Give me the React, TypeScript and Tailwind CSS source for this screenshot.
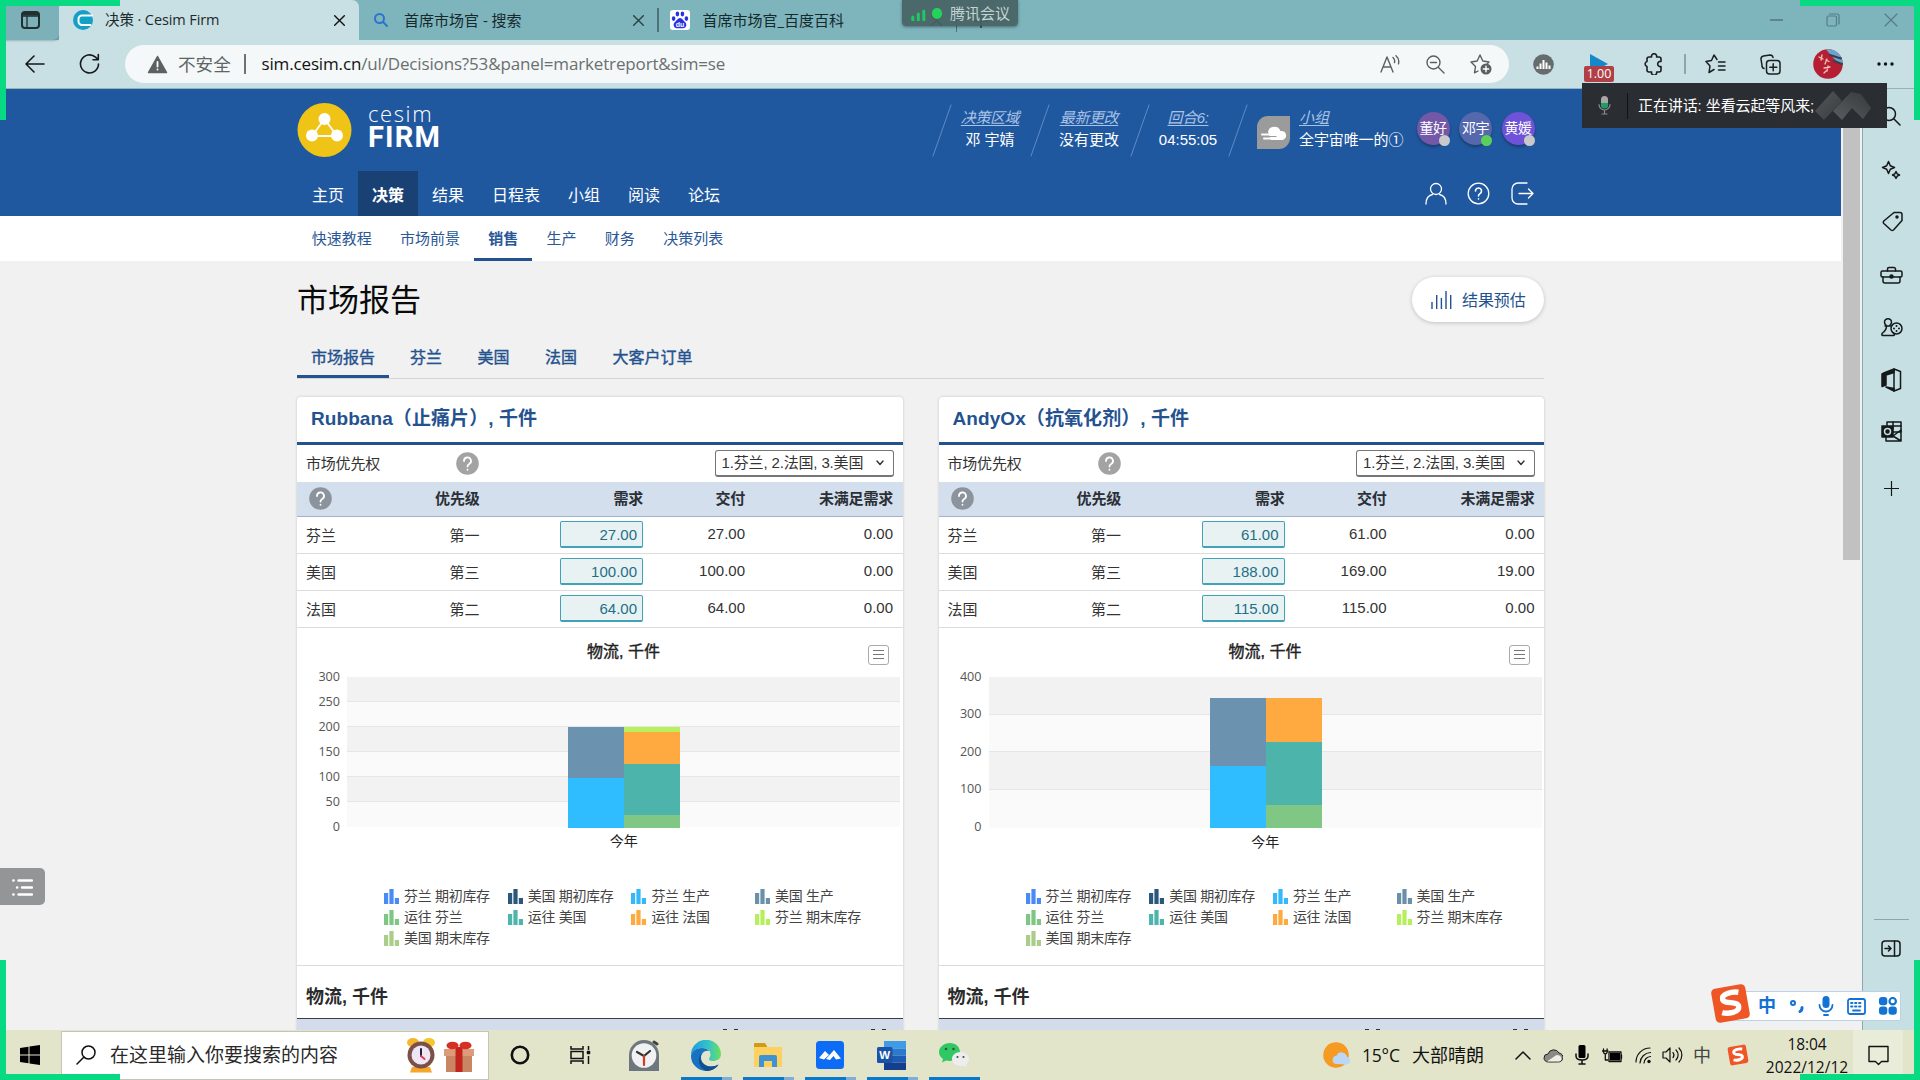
import React from "react";

const ui = "font-['Open_Sans','Noto_Sans_CJK_SC',sans-serif]";

type IconProps = { w: number; h: number; vb?: string; cls?: string; sw?: number; children: React.ReactNode };

function Ic({ w, h, vb, cls = "", sw = 1.5, children }: IconProps) {
  return (
    <svg
      width={w}
      height={h}
      viewBox={vb ?? `0 0 ${w} ${h}`}
      className={`shrink-0 block ${cls}`}
      fill="none"
      stroke="currentColor"
      strokeWidth={sw}
      strokeLinecap="round"
      strokeLinejoin="round"
    >
      {children}
    </svg>
  );
}

function CloseX({ s = 11, cls = "" }: { s?: number; cls?: string }) {
  return (
    <Ic w={s} h={s} vb="0 0 11 11" sw={1.4} cls={cls}>
      <path d="M0.7 0.7L10.3 10.3M10.3 0.7L0.7 10.3" />
    </Ic>
  );
}

function TabStrip() {
  return (
    <div className={`flex h-[40px] bg-[#7eb4bc] text-[14.5px] text-[#16292c] ${ui}`}>
      <div className="flex w-[59px] items-center rounded-br-[6px] bg-[#7cb1b9] pl-[21px] shadow-[1px_1px_2px_rgba(0,0,0,0.2)]">
        <Ic w={19} h={18} sw={2} cls="text-[#222f31]">
          <rect x="1" y="1" width="17" height="16" rx="3" />
          <path d="M1 5H18M6 5V17" strokeWidth="1.3" />
          <path d="M2 3H17" strokeWidth="3" />
        </Ic>
      </div>
      <div className="flex w-[300px] items-center rounded-t-[7px] bg-[#c8dfe3] pl-[14px]">
        <Ic w={20} h={20} sw={2}>
          <circle cx="10" cy="10" r="10" fill="#12a0c6" stroke="none" />
          <path d="M19 5.500H9a3.500 3.500 0 0 0-3.500 3.500v2.500A3.500 3.500 0 0 0 9 15H17.500" stroke="#fff" />
        </Ic>
        <span className="ml-[12px] w-[229px] whitespace-nowrap text-[14.5px] tracking-[-0.1px] text-[#1b2a2c]">决策 · Cesim Firm</span>
        <CloseX cls="text-[#111]" />
      </div>
      <div className="flex w-[298px] items-center pl-[15px]">
        <Ic w={14} h={14} sw={2} cls="text-[#2b74cf]">
          <circle cx="5.500" cy="5.500" r="4.500" />
          <path d="M9 9L13 13" />
        </Ic>
        <span className="ml-[16px] w-[229px] whitespace-nowrap text-[15px]">首席市场官 - 搜索</span>
        <CloseX cls="text-[#2a4245]" />
      </div>
      <div className="my-[8px] w-[1.5px] bg-[#4b7479]" />
      <div className="flex w-[297px] items-center pl-[11px]">
        <Ic w={20} h={20}>
          <rect width="20" height="20" rx="3" fill="#fff" stroke="none" />
          <g fill="#2932e1" stroke="none">
            <ellipse cx="7.4" cy="4" rx="1.8" ry="2.4" />
            <ellipse cx="12.4" cy="4" rx="1.8" ry="2.4" />
            <ellipse cx="3.6" cy="8.6" rx="1.8" ry="2.3" />
            <ellipse cx="16.4" cy="8.6" rx="1.8" ry="2.3" />
            <path d="M10 8c2.4 0 3 2.400 5.200 4.200 2.300 2 .8 6-2 6-1.600 0-4.800 0-6.400 0-2.800 0-4.300-4-2-6C7 10.400 7.600 8 10 8z" />
          </g>
          <text x="10" y="17" textAnchor="middle" fontSize="7" fontWeight="700" fill="#fff" stroke="none" fontFamily="Liberation Sans, sans-serif">du</text>
        </Ic>
        <span className="ml-[13px] w-[228px] whitespace-nowrap text-[15px]">首席市场官_百度百科</span>
        <CloseX cls="text-[#2a4245]" />
      </div>
      <div className="my-[8px] w-[1.5px] bg-[#4b7479]" />
      <Ic w={14} h={14} cls="ml-[17px] mt-[14px] text-[#2a4245]">
        <path d="M7 0V14M0 7H14" />
      </Ic>
      <div className="ml-auto flex w-[150px] items-center text-[#537e84]">
        <div className="h-[1.500px] w-[13px] bg-[#5d858a]" />
        <Ic w={14} h={14} sw={1.2} cls="ml-[43px]">
          <rect x="1" y="3" width="9.500" height="10" rx="1.500" />
          <path d="M3.500 1H11a2 2 0 0 1 2 2V11" />
        </Ic>
        <Ic w={14} h={14} sw={1.2} cls="ml-[44px]">
          <path d="M1 1L13 13M13 1L1 13" />
        </Ic>
      </div>
    </div>
  );
}

function Toolbar() {
  return (
    <div className={`flex h-[49px] items-center border-b-[1.500px] border-[#8fb5ba] bg-[#c8dfe3] ${ui}`}>
      <Ic w={20} h={18} sw={1.6} cls="ml-[25px] text-[#15191a]">
        <path d="M19 9H1M9 1L1 9L9 17" />
      </Ic>
      <Ic w={21} h={22} sw={1.6} cls="ml-[34px] text-[#15191a]">
        <path d="M19.500 11a9 9 0 1 1-3-6.800L19 6.500M19.300 1.500V6.800H14" />
      </Ic>
      <div className="ml-[25px] flex h-[38px] w-[1384px] items-center rounded-full bg-[#f4f8f8] pl-[22px]">
        <Ic w={21} h={19}>
          <path d="M10.500 1.500L19.500 17.500H1.500Z" fill="#5c6162" stroke="#5c6162" />
          <path d="M10.500 7V11.500M10.500 14.500V14.600" stroke="#fff" strokeWidth="1.800" />
        </Ic>
        <span className="ml-[10px] w-[66px] whitespace-nowrap text-[17.600px] text-[#5f6566]">不安全</span>
        <div className="h-[20px] w-[1.500px] bg-[#6d7374]" />
        <span className="ml-[16px] flex-1 whitespace-nowrap text-[17px] tracking-[-0.150px] text-[#6a6f70]">
          <span className="text-[#101213]">sim.cesim.cn</span>/ul/Decisions?53&amp;panel=marketreport&amp;sim=se
        </span>
        <Ic w={20} h={18} sw={1.400} cls="text-[#5b5f60]">
          <path d="M1 17L7 2L13 17M3.200 12H10.800M13 2.500a5 5 0 0 1 1.500 5M16 .8a8 8 0 0 1 2.500 8" />
        </Ic>
        <Ic w={19} h={19} sw={1.400} cls="ml-[26px] text-[#5b5f60]">
          <circle cx="7.500" cy="7.500" r="6.500" />
          <path d="M12.500 12.500L18 18M4.500 7.500H10.500" />
        </Ic>
        <Ic w={22} h={22} sw={1.400} cls="ml-[25px] mr-[17px] text-[#5b5f60]">
          <path d="M8 18L4.500 19.800L5.500 13.500L1 9L7.200 8L10 2L12.800 8L19 9L17.500 10.500" />
          <circle cx="16" cy="16" r="5.500" fill="#5b5f60" stroke="none" />
          <path d="M16 13.300V18.700M13.300 16H18.700" stroke="#fff" />
        </Ic>
      </div>
      <Ic w={21} h={21} cls="ml-[24px]" sw={2}>
        <circle cx="10.500" cy="10.500" r="10.300" fill="#666c6d" stroke="none" />
        <path d="M4.500 15V12.500M7.500 15V9.500M10.500 15V6M13.500 15V8.500M16.500 15V11.500" stroke="#fff" strokeLinecap="butt" />
      </Ic>
      <div className="ml-[30px] flex w-[30px] flex-col pt-[7px]">
        <Ic w={18} h={13} cls="ml-[6px]">
          <path d="M0 0L18 10L12 13H0Z" fill="#1488c8" stroke="none" />
        </Ic>
        <div className="-mt-[1px] h-[16px] rounded-[2px] bg-[#b04045] text-center text-[12.500px] leading-[16px] text-white">1.00</div>
      </div>
      <Ic w={20} h={22} sw={1.600} cls="ml-[30px] text-[#1a1f20]">
        <path d="M5 4H7.600a2.600 2.600 0 1 1 5 0H15a2 2 0 0 1 2 2V8.500a2.600 2.600 0 1 0 0 5V17a2 2 0 0 1-2 2H12.600a2.600 2.600 0 1 1-5 0H5a2 2 0 0 1-2-2V13.500a2.600 2.600 0 0 1 0-5V6a2 2 0 0 1 2-2Z" />
      </Ic>
      <div className="ml-[20px] h-[20px] w-[1.500px] bg-[#8fa4a7]" />
      <Ic w={21} h={20} sw={1.500} cls="ml-[19px] text-[#1a1f20]">
        <path d="M12 5.500L9 1L6.500 6.500L1 7.500L5 12L4 18.500L9 15.500M13.500 8H20M13.500 12H20M13.500 16H20" />
      </Ic>
      <Ic w={21} h={21} sw={1.500} cls="ml-[34px] text-[#1a1f20]">
        <path d="M4 14.500a3 3 0 0 1-2-3L1 5a3 3 0 0 1 2.500-3L10 1a3 3 0 0 1 3 2.500" />
        <rect x="6.500" y="6.500" width="13.500" height="13.500" rx="3" />
        <path d="M13.200 9.800V16.800M9.800 13.300H16.800" />
      </Ic>
      <Ic w={30} h={30} cls="ml-[32px]">
        <circle cx="15" cy="15" r="14.800" fill="#b61f33" stroke="none" />
        <path d="M13 .4A14.800 14.800 0 0 1 29.700 14C24 15 20 8 13 .4Z" fill="#6ba3d0" stroke="none" />
        <path d="M17 6L28 9.500M21 12L29 15" stroke="#37424d" strokeWidth="2" />
        <path d="M6 8L10 10M9 6L8 11M13 11L16 12.500M14 10L12 15M11 19L17 18M15 17L14 22M11 24L13 22" stroke="#f0c3b5" strokeWidth="1.300" />
      </Ic>
      <Ic w={17} h={4} cls="ml-[34px] text-[#111]">
        <g fill="currentColor" stroke="none">
          <circle cx="2" cy="2" r="1.700" />
          <circle cx="8.500" cy="2" r="1.700" />
          <circle cx="15" cy="2" r="1.700" />
        </g>
      </Ic>
    </div>
  );
}

function HeadInfo({ label, value, cls }: { label: string; value: string; cls: string }) {
  return (
    <div className={`flex flex-col items-center whitespace-nowrap pr-[2px] pt-[3px] text-[15px] leading-[22px] ${cls}`}>
      <span className="italic text-[#a9c3e6] underline underline-offset-2 tracking-[-0.4px]">{label}</span>
      <span className="text-white">{value}</span>
    </div>
  );
}

function Slash() {
  return (
    <Ic w={20} h={53} sw={1} cls="text-[#5f8bc8]">
      <path d="M19 1L1 52" />
    </Ic>
  );
}

function Avatar({ name, bg, dot }: { name: string; bg: string; dot: string }) {
  return (
    <div className={`relative flex h-[33px] w-[33px] items-center justify-center rounded-full shadow-[0_2px_3px_rgba(0,0,0,0.3)] ${bg}`}>
      <span className="whitespace-nowrap text-[14px] tracking-[-0.5px] text-white">{name}</span>
      <span className={`absolute -bottom-[1px] right-0 h-[11px] w-[11px] rounded-full ${dot}`} />
    </div>
  );
}

function SiteHeader() {
  const nav = ["主页", "决策", "结果", "日程表", "小组", "阅读", "论坛"];
  return (
    <header className="h-[127px] bg-[#20589f] pl-[297px]">
      <div className="flex h-[82px]">
        <Ic w={55} h={55} cls="mt-[14px]">
          <circle cx="27.500" cy="27" r="27" fill="#efc417" stroke="none" />
          <path d="M27.500 16L15 33H40Z" stroke="#fff" strokeWidth="1.800" />
          <g fill="#fff" stroke="none">
            <circle cx="27.500" cy="16" r="6" />
            <circle cx="15" cy="32.500" r="6" />
            <circle cx="40" cy="32.500" r="6" />
          </g>
        </Ic>
        <div className="ml-[16px] mt-[11px] w-[564px] text-white">
          <div className="pt-px font-['Open_Sans',sans-serif] text-[22px] font-light leading-[24px] tracking-[1.6px]">cesim</div>
          <div className="font-['Roboto',sans-serif] text-[29px] font-bold leading-[24px] tracking-[1.2px]">FIRM</div>
        </div>
        <div className="mt-[15px] flex h-[53px]">
          <Slash />
          <HeadInfo label="决策区域" value="邓 宇婧" cls="w-[78px]" />
          <Slash />
          <HeadInfo label="最新更改" value="没有更改" cls="w-[80px]" />
          <Slash />
          <HeadInfo label="回合6:" value="04:55:05" cls="w-[78px]" />
          <Slash />
          <Ic w={33} h={34} cls="ml-[9px] mt-[12px]">
            <path d="M11 0H33V22a11 11 0 0 1-11 11H0V11a11 11 0 0 1 11-11Z" fill="#9b9b9b" stroke="none" />
            <path d="M11 16a6.500 6.500 0 0 1 12.500-1a4.500 4.500 0 0 1 2 9H14Z" fill="#fff" stroke="none" />
            <path d="M5 18.500H19M7 22.500H22" stroke="#fff" strokeWidth="2" />
            <path d="M4 20.500H19" stroke="#9b9b9b" strokeWidth="1.200" />
          </Ic>
          <div className="ml-[9px] flex w-[117.500px] flex-col whitespace-nowrap pt-[3px] text-[15px] leading-[22px]">
            <span className="italic text-[#a9c3e6] underline underline-offset-2">小组</span>
            <span className="tracking-[-0.1px] text-white">全宇宙唯一的①</span>
          </div>
          <div className="flex gap-[9.500px] pt-[8px]">
            <Avatar name="董好" bg="bg-[#7258a6]" dot="bg-[#c9c9cb]" />
            <Avatar name="邓宇" bg="bg-[#5567ad]" dot="bg-[#5ad05a]" />
            <Avatar name="黄媛" bg="bg-[#6e52d8]" dot="bg-[#c9c9cb]" />
          </div>
        </div>
      </div>
      <div className="flex h-[45px] items-center">
        <nav className="flex h-full w-[1128px] pl-px">
          {nav.map((n) => (
            <span
              key={n}
              className={`flex h-full items-center px-[14px] pt-[5px] text-[16px] text-white ${n === "决策" ? "bg-[#1a4173] font-bold" : "font-normal"}`}
            >
              {n}
            </span>
          ))}
        </nav>
        <Ic w={22} h={23} sw={1.300} cls="text-white">
          <circle cx="11" cy="7" r="5.500" />
          <path d="M1 22C1 15 5 13 7.500 12.500M21 22C21 15 17 13 14.500 12.500" />
        </Ic>
        <Ic w={23} h={23} sw={1.300} cls="ml-[20px] text-white">
          <circle cx="11.500" cy="11.500" r="10.300" />
          <path d="M8.500 9a3 3 0 1 1 4.500 2.600c-1.200.7-1.500 1.200-1.500 2.400M11.500 16.800V17" strokeWidth="1.600" />
        </Ic>
        <Ic w={23} h={23} sw={1.300} cls="ml-[21px] text-white">
          <path d="M16 1H7a6 6 0 0 0-6 6v9a6 6 0 0 0 6 6h9M8 11.500H22M17.500 7L22 11.500L17.500 16" />
        </Ic>
      </div>
    </header>
  );
}

function SubNav() {
  const items = ["快速教程", "市场前景", "销售", "生产", "财务", "决策列表"];
  return (
    <div className="flex h-[45px] bg-white pl-[297.500px] text-[15px] text-[#2a5796]">
      {items.map((t) => (
        <span
          key={t}
          className={`flex items-center border-b-[3px] px-[14.150px] pt-[4px] ${t === "销售" ? "border-[#24528f] font-bold" : "border-transparent"}`}
        >
          {t}
        </span>
      ))}
    </div>
  );
}

function Help({ dark }: { dark?: boolean }) {
  return (
    <Ic w={23} h={23} sw={1.800}>
      <circle cx="11.500" cy="11.500" r="11.300" fill={dark ? "#8b939c" : "#a3a3a3"} stroke="none" />
      <path d="M8 9a3.500 3.500 0 1 1 5.200 3c-1.300.8-1.700 1.200-1.700 2.500M11.500 17.700V17.800" stroke="#fff" />
    </Ic>
  );
}

const cols = "grid grid-cols-[100px_82.500px_163.500px_102px_1fr] items-center pr-[9.500px] text-right";

type Seg = { c: string; h: number };
type CardData = {
  title: string;
  rows: string[][];
  ticks: number[];
  left: Seg[];
  right: Seg[];
};

const legend = [
  ["芬兰 期初库存", "#4a8af4"],
  ["美国 期初库存", "#2a577c"],
  ["芬兰 生产", "#35b8fa"],
  ["美国 生产", "#6b90aa"],
  ["运往 芬兰", "#7fc583"],
  ["运往 美国", "#4db5ab"],
  ["运往 法国", "#ffaa3f"],
  ["芬兰 期末库存", "#b5f05c"],
  ["美国 期末库存", "#abcd8a"],
];

function Stack({ segs }: { segs: Seg[] }) {
  return (
    <div className="flex w-[56.200px] flex-col">
      {segs.map((s) => (
        <div key={s.c} style={{ height: s.h, background: s.c }} />
      ))}
    </div>
  );
}

function Chart({ d }: { d: CardData }) {
  const step = 150.5 / (d.ticks.length - 1);
  return (
    <div className="h-[338px] border-b border-[#dcdcdc]">
      <div className="flex h-[49.500px] items-start justify-between pl-[290px] pr-[14px]">
        <span className="mt-[12px] whitespace-nowrap text-[16px] leading-[24px] text-[#222] [-webkit-text-stroke:0.4px]">物流, 千件</span>
        <div className="mt-[17px] flex h-[20px] w-[21px] flex-col items-center justify-center gap-[3px] rounded-[3px] border border-[#aaa] bg-white">
          <div className="h-px w-[11px] bg-[#777]" />
          <div className="h-px w-[11px] bg-[#777]" />
          <div className="h-px w-[11px] bg-[#777]" />
        </div>
      </div>
      <div className="flex">
        <div className={`flex w-[50px] flex-col pr-[7px] text-right text-[12.600px] text-[#555] ${ui}`}>
          {d.ticks.map((t) => (
            <div key={t} className="flex items-center justify-end" style={{ height: step, marginTop: t === d.ticks[0] ? -step / 2 : 0 }}>
              {t}
            </div>
          ))}
        </div>
        <div className="relative h-[150.500px] w-[553px]">
          {d.ticks.slice(1).map((t, i) => (
            <div
              key={t}
              className={`border-b ${i === d.ticks.length - 2 ? "border-transparent" : "border-[#e6e6e6]"} ${i % 2 ? "bg-[#fafafa]" : "bg-[#f2f2f2]"}`}
              style={{ height: step }}
            />
          ))}
          <div className="absolute bottom-0 left-[221px] flex items-end">
            <Stack segs={d.left} />
            <Stack segs={d.right} />
          </div>
        </div>
      </div>
      <div className="pl-[48px] text-center text-[14px] leading-[28px] text-[#222]" style={{ marginTop: -step / 2 }}>
        今年
      </div>
      <div className="mt-[29px] grid grid-cols-[repeat(4,123.700px)] pl-[87px]">
        {legend.map(([t, c]) => (
          <div key={t} className="flex h-[21.200px] items-center whitespace-nowrap text-[14px] tracking-[-0.300px] text-[#444]">
            <svg width="16" height="15" className="mr-[4px] mt-[3px]" fill={c}>
              <rect x="0" y="4" width="4.200" height="11" />
              <rect x="5.400" y="0" width="4.200" height="15" />
              <rect x="10.800" y="9" width="4.200" height="6" />
            </svg>
            <span className="pt-[2px]">{t}</span>
          </div>
        ))}
      </div>
    </div>
  );
}

function Card({ d }: { d: CardData }) {
  return (
    <section className="h-[640px] w-[605.500px] rounded-t-[4px] bg-white shadow-[0_0_3px_rgba(0,0,0,0.18)]">
      <h2 className="flex h-[48.500px] items-center whitespace-pre border-b-[3px] border-[#24528f] pl-[14px] text-[19px] font-bold tracking-[0.08px] text-[#24528f]">{d.title}</h2>
      <div className="flex h-[36.500px] items-center pl-[9px] pr-[9px] text-[15px] text-[#333]">
        <span className="w-[150px] pt-px tracking-[-0.2px]">市场优先权</span>
        <Help />
        <div className="ml-auto flex h-[27px] w-[179px] items-center whitespace-nowrap rounded-[3px] border border-b-2 border-[#767676] pl-[6px] pt-px text-[15px] tracking-[-0.150px]">
          1.芬兰, 2.法国, 3.美国
          <Ic w={8} h={6} cls="ml-auto mr-[9px]" sw={1.400}>
            <path d="M1 1L4 4.500L7 1" />
          </Ic>
        </div>
      </div>
      <div className={`${cols} h-[35px] border-b border-[#a3b2c8] bg-[#d3dfed] text-[15px] font-bold tracking-[-0.2px] text-[#2b2f36]`}>
        <span className="pl-[12px]">
          <Help dark />
        </span>
        <span className="pt-[2px]">优先级</span>
        <span className="pt-[2px]">需求</span>
        <span className="pt-[2px]">交付</span>
        <span className="pt-[2px]">未满足需求</span>
      </div>
      {d.rows.map((r) => (
        <div key={r[0]} className={`${cols} h-[37px] border-b border-[#dcdcdc] text-[15px] text-[#333]`}>
          <span className="pl-[9px] pt-[3px] text-left">{r[0]}</span>
          <span className="pt-[3px]">{r[1]}</span>
          <span className="ml-auto flex h-[27px] w-[83px] items-center justify-end rounded-[2px] border border-b-2 border-[#3fa3b5] bg-[#e8f2f3] pr-[5px] pt-[2px] text-[#1f6f86]">{r[2]}</span>
          <span>{r[3]}</span>
          <span>{r[4]}</span>
        </div>
      ))}
      <Chart d={d} />
      <h3 className="flex h-[53px] items-center border-b-[1.500px] border-[#3a3f46] pl-[9px] pt-[11px] text-[18px] font-bold text-[#2b2b2b]">物流, 千件</h3>
      <div className="flex h-[11px] items-end bg-[#d3dcea] pl-[426px]">
        <div className="mr-[7px] h-px w-[4px] bg-[#333]" />
        <div className="h-px w-[4px] bg-[#333]" />
        <div className="ml-[133px] mr-[7px] h-px w-[4px] bg-[#333]" />
        <div className="h-px w-[4px] bg-[#333]" />
      </div>
    </section>
  );
}

const cardA: CardData = {
  title: "Rubbana（止痛片）, 千件",
  rows: [
    ["芬兰", "第一", "27.00", "27.00", "0.00"],
    ["美国", "第三", "100.00", "100.00", "0.00"],
    ["法国", "第二", "64.00", "64.00", "0.00"],
  ],
  ticks: [300, 250, 200, 150, 100, 50, 0],
  left: [
    { c: "#6b92ae", h: 50.5 },
    { c: "#2fbdff", h: 50 },
  ],
  right: [
    { c: "#b8f15c", h: 4.5 },
    { c: "#ffaa40", h: 32.5 },
    { c: "#4cb4aa", h: 50.5 },
    { c: "#80c684", h: 13 },
  ],
};

const cardB: CardData = {
  title: "AndyOx（抗氧化剂）, 千件",
  rows: [
    ["芬兰", "第一", "61.00", "61.00", "0.00"],
    ["美国", "第三", "188.00", "169.00", "19.00"],
    ["法国", "第二", "115.00", "115.00", "0.00"],
  ],
  ticks: [400, 300, 200, 100, 0],
  left: [
    { c: "#6b92ae", h: 67.5 },
    { c: "#2fbdff", h: 62 },
  ],
  right: [
    { c: "#ffaa40", h: 43.5 },
    { c: "#4cb4aa", h: 63 },
    { c: "#80c684", h: 23 },
  ],
};

function Content() {
  return (
    <main className="h-[769px] overflow-hidden bg-[#f1f1f1] pl-[297px]">
      <div className="flex h-[77px] w-[1247px] items-center justify-between">
        <h1 className="pt-[3px] text-[31px] text-[#0a0a0a]">市场报告</h1>
        <div className="flex h-[45px] w-[132px] items-center rounded-full bg-white pl-[19px] text-[#24528f] shadow-[0_1px_4px_rgba(0,0,0,0.2)]">
          <Ic w={21} h={20} sw={1.400}>
            <path d="M1 12V19M5.700 5V19M10.400 8V19M15 1V19M19.700 5V19" strokeLinecap="butt" />
          </Ic>
          <span className="ml-[10px] pt-[2px] text-[16px] tracking-[-0.1px]">结果预估</span>
        </div>
      </div>
      <div className="flex h-[41px] w-[1247px] gap-[6.500px] border-b border-[#d5d5d5] text-[16px] text-[#24528f] [-webkit-text-stroke:0.4px]">
        <span className="flex items-center border-b-[3px] border-[#24528f] px-[14px] pt-[2px]">市场报告</span>
        {["芬兰", "美国", "法国", "大客户订单"].map((t) => (
          <span key={t} className="flex items-center border-b-[3px] border-transparent px-[14.500px] pt-[2px]">{t}</span>
        ))}
      </div>
      <div className="mt-[17.500px] flex gap-[36px]">
        <Card d={cardA} />
        <Card d={cardB} />
      </div>
    </main>
  );
}

function Sidebar() {
  return (
    <aside className="flex w-[58px] flex-col items-center border-l border-[#93a5a8] bg-[#c6dfe2] pr-[1px] text-[#15191a]">
      <Ic w={20} h={20} cls="mt-[17px]">
        <circle cx="8" cy="8" r="6.500" />
        <path d="M13 13L19 19" />
      </Ic>
      <Ic w={20} h={20} cls="mt-[33px]">
        <path d="M7.500 2.500L9.300 6.800L13.500 8.500L9.300 10.200L7.500 14.500L5.700 10.200L1.500 8.500L5.700 6.800ZM15 12.500L16.200 14.800L18.500 16L16.200 17.200L15 19.500L13.800 17.200L11.500 16L13.800 14.800Z" />
      </Ic>
      <Ic w={21} h={21} cls="ml-[2px] mt-[32px]">
        <path d="M12 1.500H18a2 2 0 0 1 2 2V9.500L11.500 19a2 2 0 0 1-2.500 0L1.800 12.500a2 2 0 0 1 0-2.500Z" />
        <circle cx="15" cy="6" r="1" fill="currentColor" />
      </Ic>
      <Ic w={23} h={18} cls="mt-[34px]">
        <rect x="1" y="5" width="21" height="6" rx="1.500" />
        <path d="M3 11V15a2 2 0 0 0 2 2H18a2 2 0 0 0 2-2V11M7.500 5V3a1.500 1.500 0 0 1 1.500-1.500H14A1.500 1.500 0 0 1 15.500 3V5" />
        <circle cx="11.500" cy="10.500" r="1.500" fill="currentColor" />
      </Ic>
      <Ic w={23} h={20} cls="mt-[33px]">
        <path d="M6 8a3.500 3.500 0 1 1 4 0M5 9H10.500M6.500 9c0 4-1.500 5-4 7-1 1-1 2.500.5 2.500H13.500c1.500 0 1-1.500 0-2.500" />
        <circle cx="16.500" cy="11.500" r="5.500" />
        <g fill="currentColor" stroke="none">
          <circle cx="16.500" cy="9" r="1" />
          <circle cx="16.500" cy="14" r="1" />
          <circle cx="14" cy="11.500" r="1" />
          <circle cx="19" cy="11.500" r="1" />
        </g>
      </Ic>
      <Ic w={21} h={24} cls="mt-[31px]">
        <path d="M13 1L19.500 3.500V20.500L13 23V1Z" />
        <path d="M13 1L4 4.500L1 6V18.500L5 17V7L13 4.500ZM5 19L13 20.500V23Z" fill="currentColor" />
      </Ic>
      <Ic w={21} h={21} cls="mt-[29px]">
        <rect x="6" y="1" width="14" height="10" />
        <path d="M12 1V8M12 5H20M5 13V20H20V9L12 15L20 20" />
        <rect x="1" y="5" width="11" height="11" fill="currentColor" />
        <circle cx="6.500" cy="10.500" r="3" stroke="#c6dfe2" />
      </Ic>
      <Ic w={15} h={15} cls="mt-[39px]" sw={1.200}>
        <path d="M7.500 0V15M0 7.500H15" />
      </Ic>
      <div className="mt-[423px] h-px w-[35px] bg-[#8ea6a9]" />
      <Ic w={20} h={17} cls="mt-[20px]">
        <rect x="1" y="1" width="18" height="15" rx="3" />
        <path d="M13.500 1V16M4 8.500H10M7.500 6L10 8.500L7.500 11" />
      </Ic>
    </aside>
  );
}

function Sogou({ s }: { s: number }) {
  return (
    <Ic w={s} h={s} vb="0 0 38 38">
      <g transform="rotate(-10 19 19)">
        <rect x="3" y="3" width="32" height="32" rx="4" fill="#ee5626" stroke="none" />
        <path d="M28 10C22 8 12 9 12.500 14C13 19 26 17.500 26 23C26 28.500 15 28.500 10 26" stroke="#fff" strokeWidth="5" strokeLinecap="butt" />
      </g>
    </Ic>
  );
}

function Running({ children, two = true }: { children: React.ReactNode; two?: boolean }) {
  return (
    <div className="mr-[11px] flex h-[50px] w-[51px] flex-col items-center justify-between">
      <div className="flex h-[47px] items-center pt-[3px] pr-px">{children}</div>
      <div className="flex h-[3px] w-full">
        <div className="flex-1 bg-[#0e78c8]" />
        {two && <div className="w-[10px] bg-[#7faedb]" />}
      </div>
    </div>
  );
}

function Taskbar() {
  return (
    <div className={`flex h-[50px] items-center bg-[#e3e5cb] text-[#111] ${ui}`}>
      <Ic w={20} h={20} cls="ml-[20px]">
        <g fill="#000" stroke="none">
          <path d="M0 3L8.500 1.700V9.500H0ZM9.500 1.500L20 0V9.500H9.500ZM0 10.500H8.500V18.300L0 17ZM9.500 10.500H20V20L9.500 18.500Z" />
        </g>
      </Ic>
      <div className="ml-[20.500px] flex h-[49px] w-[428.500px] items-center border border-[#c3c5b8] bg-white pl-[14px]">
        <Ic w={20} h={20} sw={1.500}>
          <circle cx="12.500" cy="7.500" r="6.500" />
          <path d="M8 12L1 19" />
        </Ic>
        <span className="ml-[14.500px] w-[295.500px] whitespace-nowrap text-[19px] text-[#2a2a2a]">在这里输入你要搜索的内容</span>
        <Ic w={30} h={36}>
          <ellipse cx="7" cy="5.500" rx="6" ry="4.500" fill="#f7b52c" stroke="none" />
          <ellipse cx="23" cy="5.500" rx="6" ry="4.500" fill="#f7c52c" stroke="none" />
          <path d="M6 30H24L26 35.500H4Z" fill="#f7a62c" stroke="none" />
          <circle cx="15" cy="18" r="13.500" fill="#7b5048" stroke="none" />
          <circle cx="15" cy="18" r="9.500" fill="#eee6f4" stroke="none" />
          <path d="M15 12V19" stroke="#26203a" strokeWidth="2" />
          <path d="M15 19L18.500 22" stroke="#e8395c" strokeWidth="2" />
        </Ic>
        <Ic w={30} h={32} cls="ml-[8px] mt-[3px]">
          <path d="M2 14H28V31H2Z" fill="#c98664" stroke="none" />
          <path d="M0 8H30V15H0Z" fill="#dd9c79" stroke="none" />
          <path d="M11.500 6H18.500V31H11.500Z" fill="#c3241d" stroke="none" />
          <ellipse cx="8.500" cy="4.500" rx="6" ry="3.800" fill="#d52f26" stroke="none" />
          <ellipse cx="21.500" cy="4.500" rx="6" ry="3.800" fill="#d52f26" stroke="none" />
        </Ic>
      </div>
      <Ic w={20} h={20} sw={2.600} cls="ml-[21px]">
        <circle cx="10" cy="10" r="8.200" />
      </Ic>
      <Ic w={21} h={20} sw={1.500} cls="ml-[40px]">
        <path d="M1 1V4H13V1M1 19V16H13V19M1 6.500H13V13.500H1ZM18.500 1V5M18.500 11V19" strokeLinecap="butt" strokeLinejoin="miter" />
        <rect x="17.500" y="6.500" width="2" height="2" fill="#111" />
      </Ic>
      <Ic w={30} h={31} cls="ml-[38px] mr-[22px]">
        <path d="M0 15a15 15 0 0 1 30 0V31H0Z" fill="#6e7780" stroke="none" />
        <circle cx="15" cy="15.500" r="12.300" fill="#f0f1f2" stroke="none" />
        <path d="M25 2L28 4" stroke="#444" strokeWidth="3" />
        <path d="M8 12L15 16L21 11" stroke="#333" strokeWidth="2.200" />
        <path d="M15 16V25" stroke="#d43b24" strokeWidth="2.200" />
      </Ic>
      <Running>
        <Ic w={30} h={31}>
          <defs>
            <linearGradient id="edgeTop" x1="0" y1="0.500" x2="1" y2="0.500">
              <stop offset="0" stopColor="#1d9be0" />
              <stop offset="0.600" stopColor="#36c6c4" />
              <stop offset="1" stopColor="#6be05a" />
            </linearGradient>
          </defs>
          <path d="M0 15.500A15 15 0 0 1 30 14c0 5-4 7-8 7-3 0-4-1-4-2s1.500-2 1.500-4.500C19.500 10 16 8 11 8 5 8 1 11 0 15.500Z" fill="url(#edgeTop)" stroke="none" />
          <path d="M0 15.500C1 11 5 8 11 8c3 0 6 1 7.500 3C14 9.500 10 13 10 18c0 5 5 8.500 10 8.500 4 0 6.500-1.500 7.500-2-2.500 4-7 6.500-12.500 6.500A15.200 15.200 0 0 1 0 15.500Z" fill="#1673c4" stroke="none" />
          <path d="M11 13C9.500 15 9 17 10 20c1.500 4 5.500 6.500 10 6.500 4 0 6.500-1.500 7.500-2-2.500 4-7 6.500-12.500 6.500C8 28 5 18 11 13Z" fill="#124f8f" stroke="none" />
        </Ic>
      </Running>
      <Running>
        <Ic w={28} h={25}>
          <path d="M0 1a1 1 0 0 1 1-1H11L13 3V6H0Z" fill="#d39a17" stroke="none" />
          <path d="M0 4H27a1 1 0 0 1 1 1V23a1 1 0 0 1-1 1H1a1 1 0 0 1-1-1Z" fill="#fdd15f" stroke="none" />
          <path d="M5 24V14a2 2 0 0 1 2-2H21a2 2 0 0 1 2 2V24H18V18H10V24Z" fill="#3f93d2" stroke="none" />
        </Ic>
      </Running>
      <Running>
        <Ic w={28} h={28}>
          <rect width="28" height="28" rx="3.500" fill="#0d6cf5" stroke="none" />
          <path d="M3 17L9 10L13 14L8 18.500ZM10 18L18 9L25 17.500L20 18.500L17.500 15L14 19Z" fill="#fff" stroke="none" />
        </Ic>
      </Running>
      <Running>
        <Ic w={30} h={29}>
          <path d="M7 0H29V7.500H7Z" fill="#3f9be6" stroke="none" />
          <path d="M7 7.500H29V14.500H7Z" fill="#2a7bd0" stroke="none" />
          <path d="M7 14.500H29V21.500H7Z" fill="#1c5cb4" stroke="none" />
          <path d="M7 21.500H29V29H7Z" fill="#133f8c" stroke="none" />
          <rect x="0" y="6" width="15.500" height="16" rx="1.500" fill="#1a53a8" stroke="none" />
          <text x="7.700" y="18.300" textAnchor="middle" fontSize="11.500" fontWeight="700" fill="#fff" stroke="none" fontFamily="Liberation Sans, sans-serif">W</text>
        </Ic>
      </Running>
      <Running two={false}>
        <Ic w={30} h={26}>
          <path d="M11 1C5 1 0 5 0 10c0 3 1.500 5 4 7l-1 3.500L7 18.500c6 1.500 14-1 14-8C21 5 17 1 11 1Z" fill="#2fc862" stroke="none" />
          <path d="M21.500 10c-5 0-8.500 3-8.500 7s4 7 8.500 7c1.500 0 2.500-.3 3.500-.6L28 25l-.6-3c1.600-1.300 2.600-3 2.600-5 0-4-4-7-8.500-7Z" fill="#ededed" stroke="none" />
          <g fill="#38564a" stroke="none">
            <circle cx="7" cy="7" r="1.300" />
            <circle cx="14.500" cy="7" r="1.300" />
            <circle cx="18.500" cy="15" r="1.100" />
            <circle cx="24.500" cy="15" r="1.100" />
          </g>
        </Ic>
      </Running>
      <Ic w={29} h={27} cls="ml-[332px]">
        <circle cx="13" cy="13" r="12.800" fill="#f59a22" stroke="none" />
        <path d="M13 22a4.200 4.200 0 0 1 .5-8.300A5.500 5.500 0 0 1 24 15a3.800 3.800 0 0 1 0 7.500Z" fill="#bcd7f5" stroke="none" />
      </Ic>
      <span className="ml-[10px] w-[50px] whitespace-nowrap text-[17.500px] tracking-[-0.200px]">15°C</span>
      <span className="w-[103px] whitespace-nowrap text-[18px]">大部晴朗</span>
      <Ic w={16} h={9} sw={1.500}>
        <path d="M1 8L8 1L15 8" />
      </Ic>
      <Ic w={20} h={15} sw={1} cls="ml-[12px]">
        <path d="M5 14a4 4 0 0 1 0-8a6 6 0 0 1 11-1a4.500 4.500 0 0 1-1 9Z" fill="#8a8c84" stroke="#222" />
        <path d="M4 13.500L12 8a4 4 0 0 1 6.500 3.500 3 3 0 0 1-3 2Z" fill="#efefe6" stroke="none" />
      </Ic>
      <Ic w={14} h={20} cls="ml-[12px]">
        <rect x="3.500" y="0" width="7" height="13" rx="1.500" fill="#000" stroke="none" />
        <path d="M1 9V11c0 3 2.500 4 6 4s6-1 6-4V9M7 15V19M4 19H10" />
      </Ic>
      <Ic w={21} h={15} cls="ml-[13px]" sw={1.300}>
        <rect x="7" y="4" width="12" height="9.500" />
        <rect x="8" y="5" width="10" height="7.500" fill="#000" stroke="none" />
        <path d="M19.500 7V10.500M1.500 1V4a1.800 1.800 0 0 0 3.600 0V1M0.500 3H6M3.300 6V12H6" />
      </Ic>
      <Ic w={17} h={17} sw={1.200} cls="ml-[12px]">
        <path d="M1 15A14 14 0 0 1 15 1M5 16A11 11 0 0 1 15.500 5.500M9 16A7 7 0 0 1 15.500 9.500" />
        <circle cx="14" cy="14.500" r="1.700" fill="#111" stroke="none" />
      </Ic>
      <Ic w={21} h={16} sw={1.200} cls="ml-[10px]">
        <path d="M1 5H4L8 1V15L4 11H1ZM11 5.500a4 4 0 0 1 0 5M14 3a7 7 0 0 1 0 10M17 1a10 10 0 0 1 0 14" />
      </Ic>
      <span className="ml-[10px] w-[34px] text-[18px] text-[#444]">中</span>
      <Sogou s={22} />
      <div className="ml-[13px] flex w-[90px] flex-col items-center pt-[1px] text-[15.500px] leading-[23px]">
        <span className="tracking-[-0.1px]">18:04</span>
        <span className="whitespace-nowrap">2022/12/12</span>
      </div>
      <div className="ml-[1px] flex h-full w-[50px] items-center justify-center bg-[#e9ecd8]">
        <Ic w={21} h={21} sw={1.400}>
          <path d="M1 1.500H20V16.500H13.500L10.500 19.500L7.500 16.500H1Z" />
        </Ic>
      </div>
    </div>
  );
}

function Overlays() {
  return (
    <>
      <div className={`absolute left-[902px] top-0 flex h-[26px] w-[116px] items-center rounded-b-[4px] bg-[#466061]/90 pl-[9px] shadow-[0_1px_3px_rgba(0,0,0,0.4)] ${ui}`}>
        <Ic w={15} h={12} cls="mt-[3px]" sw={3}>
          <path d="M1.800 8V11M7.300 5V11M12.800 2V11" stroke="#1fc862" />
        </Ic>
        <div className="ml-[6px] mt-[1px] h-[11px] w-[10px] rounded-full bg-[#24d35a]" />
        <span className="ml-[8px] whitespace-nowrap text-[15px] text-[#c5d3d3]">腾讯会议</span>
      </div>
      <div className="absolute left-[1582px] top-[83px] flex h-[45px] w-[305px] items-center bg-[#2a2d31]">
        <Ic w={13} h={19} cls="ml-[16px]">
          <rect x="3" y="0" width="7" height="12" rx="3.500" fill="#a7a7a7" stroke="none" />
          <path d="M3 7H10V9a3.500 3.500 0 0 1-7 0Z" fill="#1f9e63" stroke="none" />
          <path d="M1 8.500a5.500 5.500 0 0 0 11 0M6.500 14V18M4 18H9" stroke="#8b8b8b" strokeWidth="1.200" />
        </Ic>
        <div className="ml-[16px] h-[26px] w-px bg-[#111315]" />
        <span className="ml-[10px] w-[177px] whitespace-nowrap pt-px text-[15px] tracking-[-0.100px] text-white">正在讲话: 坐看云起等风来;</span>
        <svg width="57" height="34" className="shrink-0">
          <defs>
            <linearGradient id="peakL" x1="0" y1="0" x2="1" y2="1">
              <stop offset="0" stopColor="#54575a" />
              <stop offset="1" stopColor="#3a3d40" />
            </linearGradient>
            <linearGradient id="peakR" x1="0" y1="1" x2="1" y2="0">
              <stop offset="0" stopColor="#5b5e61" />
              <stop offset="1" stopColor="#36393c" />
            </linearGradient>
          </defs>
          <path d="M0 22L18 2L27 12L9 31Z" fill="url(#peakL)" />
          <path d="M18 22L36 3L46 5L56 19L48 30L37 19L27 31Z" fill="url(#peakR)" />
        </svg>
      </div>
      <div className="absolute left-0 top-[868px] flex h-[37px] w-[45px] items-center rounded-r-[5px] bg-[#949596] pl-[12px]">
        <Ic w={21} h={18} sw={2.400} cls="text-white">
          <path d="M6.500 2.500H20M10 9.500H20M6.500 16.500H20M1.300 2.500H1.600M5 9.500H5.300M1.300 16.500H1.600" />
        </Ic>
      </div>
      <div className="absolute left-[1730px] top-[991px] flex h-[30px] w-[171px] items-center gap-[13px] rounded-[2px] border border-[#b9d2e8] bg-white pl-[27px] text-[#1273d4]">
        <span className="w-[18px] text-[18px] font-bold leading-none">中</span>
        <Ic w={16} h={16} sw={2}>
          <circle cx="4" cy="5" r="2" />
          <path d="M13 9.500V10c0 2-1 3-2 3.500" strokeWidth="3" />
        </Ic>
        <Ic w={16} h={20} sw={1.800}>
          <rect x="4.500" y="0" width="7" height="12" rx="3.500" fill="currentColor" stroke="none" />
          <path d="M1.500 9a6.500 6.500 0 0 0 13 0M6 19H10" />
        </Ic>
        <Ic w={19} h={17} sw={1.800}>
          <rect x="1" y="1" width="17" height="15" rx="2" />
          <path d="M4 5H15M4 8.500H15" strokeDasharray="1.500 2.500" />
          <path d="M6 12.500H13" />
        </Ic>
        <Ic w={18} h={18}>
          <g fill="currentColor" stroke="none">
            <rect width="8.300" height="8.300" rx="3" />
            <rect y="9.500" width="8.300" height="8.300" rx="3" />
            <rect x="9.500" y="9.500" width="8.300" height="8.300" rx="3" />
          </g>
          <circle cx="13.700" cy="4.200" r="3.200" strokeWidth="2.200" />
        </Ic>
      </div>
      <div className="absolute left-[1710px] top-[983px]">
        <Sogou s={41} />
      </div>
      <div className="absolute left-0 top-0 h-[120px] w-[120px] border-l-[6px] border-t-[6px] border-[#08d983]" />
      <div className="absolute right-0 top-0 h-[120px] w-[120px] border-r-[6px] border-t-[6px] border-[#08d983]" />
      <div className="absolute bottom-0 left-0 h-[120px] w-[120px] border-b-[6px] border-l-[6px] border-[#08d983]" />
      <div className="absolute bottom-0 right-0 h-[120px] w-[120px] border-b-[6px] border-r-[6px] border-[#08d983]" />
    </>
  );
}

export default function App() {
  return (
    <div className="relative h-[1080px] w-[1920px] overflow-hidden bg-[#f1f1f1] font-['Liberation_Sans','Noto_Sans_CJK_SC',sans-serif]">
      <TabStrip />
      <Toolbar />
      <div className="flex h-[941px]">
        <div className="w-[1841px]">
          <SiteHeader />
          <SubNav />
          <Content />
        </div>
        <div className="w-[21px] bg-[#f1f1f1] px-[2px]">
          <div className="h-[471px] bg-[#c1c1c1]" />
        </div>
        <Sidebar />
      </div>
      <Taskbar />
      <Overlays />
    </div>
  );
}
